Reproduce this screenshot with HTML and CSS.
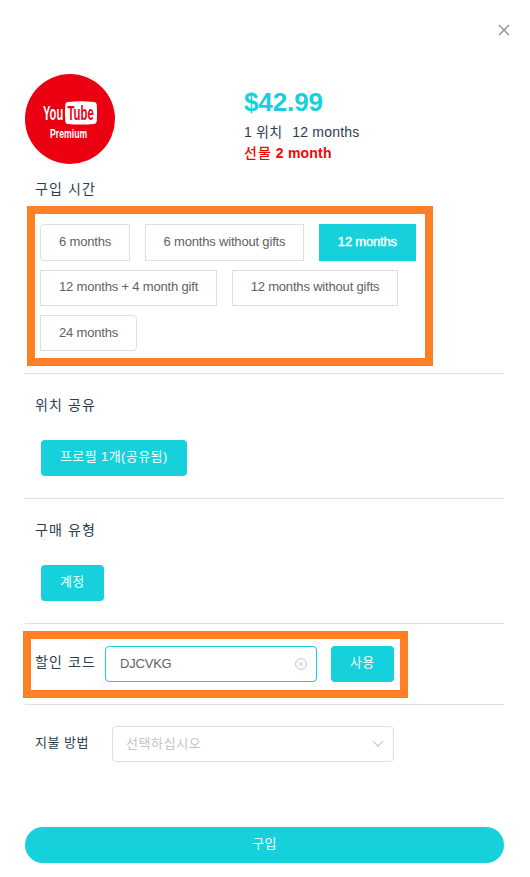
FILE: index.html
```html
<!DOCTYPE html>
<html lang="ko">
<head>
    <meta charset="UTF-8">
    <meta name="viewport" content="width=device-width, initial-scale=1.0">
    <title>YouTube Premium</title>
    <link rel="stylesheet" href="styles.css">
</head>
<body>

<div class="dialog">
    <div class="dialog-header">
        <svg class="close" viewBox="0 0 12 12"><path d="M1 1l10 10M11 1L1 11"/></svg>
    </div>

    <div class="product">
        <svg class="logo" viewBox="0 0 90 90">
            <circle cx="45" cy="45" r="45" fill="#ea0010"/>
            <path d="M43 27.9q13-1.2 26 0q2.600.2 2.800 3.200q.6 8 0 15.600q-.2 3-2.800 3.200q-13 1-26 0q-2.600-.2-2.800-3.200q-.6-7.600 0-15.600q.2-3 2.800-3.200z" fill="#fff"/>
            <g class="logo-text">
                <text transform="translate(18 46.300) scale(.53 1)" font-size="21" fill="#fff">You</text>
                <text transform="translate(42.500 46.300) scale(.54 1)" font-size="21" fill="#ea0010">Tube</text>
                <text transform="translate(25 64) scale(.67 1)" font-size="13" fill="#fff">Premium</text>
            </g>
        </svg>
        <div class="info">
            <div class="price">$42.99</div>
            <div class="detail"><span>1 위치</span><span>12 months</span></div>
            <div class="gift"><span>선물</span> 2 month</div>
        </div>
    </div>

    <div class="section section-time">
        <div class="label">구입 시간</div>
        <div class="highlight highlight-time">
            <div class="row">
                <button class="option first">6 months</button>
                <button class="option">6 months without gifts</button>
                <button class="option selected">12 months</button>
            </div>
            <div class="row">
                <button class="option">12 months + 4 month gift</button>
                <button class="option">12 months without gifts</button>
            </div>
            <div class="row">
                <button class="option last">24 months</button>
            </div>
        </div>
    </div>

    <div class="section section-single">
        <div class="label">위치 공유</div>
        <button class="btn btn-single">프로필 1개(공유됨)</button>
    </div>

    <div class="section section-single">
        <div class="label">구매 유형</div>
        <button class="btn btn-single">계정</button>
    </div>

    <div class="section section-code">
        <div class="highlight highlight-code">
            <div class="label">할인 코드</div>
            <div class="field code">
                <span>DJCVKG</span>
                <svg class="clear" viewBox="0 0 12 12"><circle cx="6" cy="6" r="5.400"/><path d="M4.200 4.200l3.600 3.600M7.800 4.200L4.200 7.800"/></svg>
            </div>
            <button class="btn">사용</button>
        </div>
    </div>

    <div class="payment">
        <div class="label label-small">지불 방법</div>
        <div class="field select">
            <span>선택하십시오</span>
            <svg class="arrow" viewBox="0 0 12 8"><path d="M1.200 1.400L6 6.200l4.800-4.800"/></svg>
        </div>
    </div>

    <button class="buy">구입</button>
</div>

</body>
</html>
```
FILE: styles.css
```css
* {
    box-sizing: border-box;
}
body {
    margin: 0;
    background-color: #fff;
    font-family: "Liberation Sans", Arial, "Noto Sans CJK KR", sans-serif;
    font-size: 14px;
    color: #2c3e50;
}
.dialog {
    width: 530px;
    height: 877px;
    padding: 0 26px 0 25px;
}
.dialog-header {
    display: flex;
    justify-content: flex-end;
    height: 74px;
    padding-top: 24px;
}
.close {
    width: 12px;
    height: 12px;
    margin-right: -6px;
    fill: none;
    stroke: #85888e;
    stroke-width: 1.2;
}
.product {
    display: grid;
    grid-template-columns: 219px 1fr;
    height: 104px;
}
.logo {
    width: 90px;
    height: 90px;
}
.logo-text {
    font-family: "Liberation Sans", sans-serif;
    font-weight: bold;
}
.info {
    padding-top: 11px;
}
.price {
    font-size: 26px;
    line-height: 34px;
    font-weight: bold;
    letter-spacing: -0.1px;
    color: #16d0dc;
}
.detail {
    display: flex;
    gap: 10px;
    line-height: 22px;
    margin-top: 2px;
    letter-spacing: 0.2px;
}
.gift {
    line-height: 20px;
    font-weight: bold;
    letter-spacing: 0.2px;
    color: #f00;
}
.gift span {
    font-weight: 500;
    letter-spacing: 1px;
}
.section {
    border-bottom: 1px solid #dcdfe6;
}
.section-time {
    height: 196px;
}
.section-single {
    height: 125px;
    padding-top: 20px;
}
.section-code {
    height: 81px;
    padding-top: 7px;
}
.label {
    padding-left: 10px;
    line-height: 22px;
    letter-spacing: 1.1px;
    white-space: nowrap;
}
.highlight {
    border: 8px solid #ff7f27;
}
.highlight-time {
    display: flex;
    flex-direction: column;
    gap: 9px;
    width: 406px;
    height: 160px;
    margin: 6px 0 0 2px;
    padding: 10px 0 0 5px;
}
.row {
    display: flex;
    gap: 14.5px;
}
.row:first-child .option {
    height: 37px;
}
button {
    font-family: inherit;
    font-size: 13px;
    line-height: 16px;
    white-space: nowrap;
}
.option {
    height: 36px;
    padding: 0 18px 2px;
    border: 1px solid #dcdfe6;
    background-color: #fff;
    color: #606266;
    letter-spacing: -0.18px;
}
.first {
    border-radius: 4px 0 0 4px;
}
.last {
    padding: 0 18px;
    border-radius: 0 4px 4px 0;
}
.selected {
    border-color: #16d0dc;
    background-color: #16d0dc;
    color: #fff;
    -webkit-text-stroke: 0.4px #fff;
}
.btn {
    height: 36px;
    padding: 0 19px 2px;
    border: none;
    border-radius: 4px;
    background-color: #16d0dc;
    color: #fff;
    letter-spacing: 0.4px;
}
.btn-single {
    margin: 24px 0 0 16px;
}
.highlight-code {
    display: flex;
    align-items: flex-start;
    width: 385px;
    height: 67px;
    margin-left: -2px;
    padding: 7px 0 0 4px;
}
.highlight-code .label {
    padding: 5px 0 0;
    width: 70px;
}
.highlight-code .btn {
    margin-left: 14px;
}
.field {
    display: flex;
    align-items: center;
    justify-content: space-between;
    height: 36px;
    border: 1px solid #dcdfe6;
    border-radius: 4px;
    font-size: 13px;
}
.code {
    width: 212px;
    padding: 0 9px 1px 14px;
    border-color: #16d0dc;
    color: #606266;
    letter-spacing: -0.2px;
}
.clear {
    width: 12px;
    height: 12px;
    fill: none;
    stroke: #c0c4cc;
}
.payment {
    display: flex;
    align-items: center;
    height: 36px;
    margin-top: 21px;
}
.label-small {
    width: 87px;
    padding-bottom: 2px;
    font-size: 13px;
    letter-spacing: 0.5px;
}
.select {
    width: 282px;
    padding: 0 9px 3px 13px;
    color: #c0c4cc;
    letter-spacing: 0.6px;
}
.arrow {
    width: 12px;
    height: 8px;
    margin-top: 3px;
    fill: none;
    stroke: #c0c4cc;
    stroke-width: 1.2;
}
.buy {
    display: block;
    width: 100%;
    height: 36px;
    margin-top: 65px;
    padding: 0 0 2px;
    border: none;
    border-radius: 18px;
    background-color: #16d0dc;
    color: #fff;
    letter-spacing: 0.4px;
}
```
